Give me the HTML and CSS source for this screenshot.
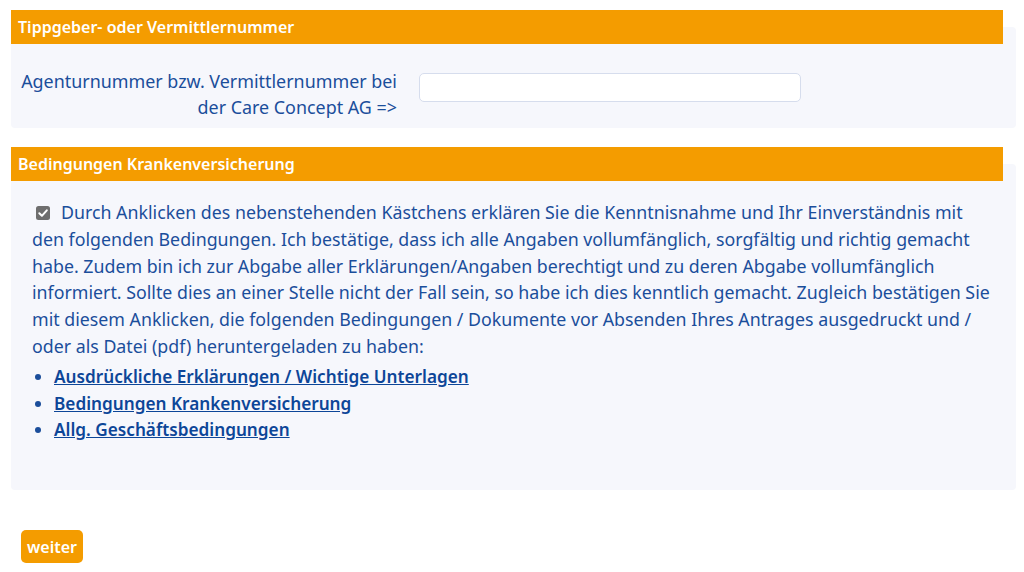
FILE: index.html
```html
<!DOCTYPE html>
<html lang="de">
<head>
<meta charset="utf-8">
<title>Antrag</title>
<link rel="stylesheet" href="styles.css">
</head>
<body>
<section class="panel panel-agent">
  <h2 class="panel-head">Tippgeber- oder Vermittlernummer</h2>
  <div class="agent-row">
    <label class="agent-label" for="agent">Agenturnummer bzw. Vermittlernummer bei der Care Concept AG =&gt;</label>
    <input class="agent-input" id="agent" type="text">
  </div>
</section>

<section class="panel panel-terms">
  <h2 class="panel-head">Bedingungen Krankenversicherung</h2>
  <div class="terms-body">
    <p class="terms-text"><span class="check"><svg viewBox="0 0 14 14" width="14" height="14"><rect x="0" y="0" width="14" height="14" rx="2.5" fill="#6e6e6e"/><path d="M3.3 7.2 L5.9 9.8 L10.8 4.3" fill="none" stroke="#fff" stroke-width="2" stroke-linecap="round" stroke-linejoin="round"/></svg></span>Durch Anklicken des nebenstehenden Kästchens erklären Sie die Kenntnisnahme und Ihr Einverständnis mit den folgenden Bedingungen. Ich bestätige, dass ich alle Angaben vollumfänglich, sorgfältig und richtig gemacht habe. Zudem bin ich zur Abgabe aller Erklärungen/Angaben berechtigt und zu deren Abgabe vollumfänglich informiert. Sollte dies an einer Stelle nicht der Fall sein, so habe ich dies kenntlich gemacht. Zugleich bestätigen Sie mit diesem Anklicken, die folgenden Bedingungen / Dokumente vor Absenden Ihres Antrages ausgedruckt und / oder als Datei (pdf) heruntergeladen zu haben:</p>
    <ul class="terms-links">
      <li><a href="#">Ausdrückliche Erklärungen / Wichtige Unterlagen</a></li>
      <li><a href="#">Bedingungen Krankenversicherung</a></li>
      <li><a href="#">Allg. Geschäftsbedingungen</a></li>
    </ul>
  </div>
</section>

<div class="actions">
  <button class="btn-next" type="button">weiter</button>
</div>
</body>
</html>
```

FILE: styles.css
```css
html, body {
  margin: 0;
  padding: 0;
  background: #ffffff;
}
body {
  font-family: "Noto Sans", "Open Sans", sans-serif;
  color: #1b4e9b;
  padding: 0 8px 0 11px;
}
.panel {
  display: flow-root;
  background: #f6f7fc;
  border-radius: 4px;
}
.panel-head {
  margin: -17px 13px 0 0;
  background: #f49c00;
  color: #ffffff;
  font-size: 16px;
  font-weight: 600;
  line-height: 34px;
  height: 34px;
  padding: 0 7px;
}
.panel-agent {
  margin-top: 27px;
  padding-bottom: 8px;
}
.agent-row {
  display: grid;
  grid-template-columns: 376px 382px;
  column-gap: 22px;
  align-items: start;
  padding: 24px 0 0 10px;
}
.agent-label {
  text-align: right;
  font-size: 17.9px;
  line-height: 26px;
}
.agent-input {
  box-sizing: border-box;
  height: 29px;
  border: 1px solid #d6dded;
  border-radius: 5px;
  background: #fff;
  margin-top: 5px;
}
.panel-terms {
  margin-top: 36px;
  height: 326px;
}
.terms-body {
  padding: 18px 22px 0 21px;
}
.terms-text {
  margin: 0;
  font-size: 17.8px;
  line-height: 26.8px;
}
.check {
  display: inline-block;
  margin: 0 11px 0 4px;
  vertical-align: -1px;
}
.check svg {
  display: block;
}
.terms-links {
  margin: 4px 0 0 0;
  padding: 0 0 0 22px;
  font-size: 17.2px;
  line-height: 26.8px;
}
.terms-links a {
  color: #0d4698;
  font-weight: 600;
  text-decoration: underline;
}
.actions {
  padding: 40px 0 0 10px;
}
.btn-next {
  background: #f49c00;
  color: #ffffff;
  border: 0;
  border-radius: 5px;
  font-family: "Noto Sans", "Open Sans", sans-serif;
  font-size: 16px;
  font-weight: 600;
  height: 33px;
  padding: 0 6px;
}
```
